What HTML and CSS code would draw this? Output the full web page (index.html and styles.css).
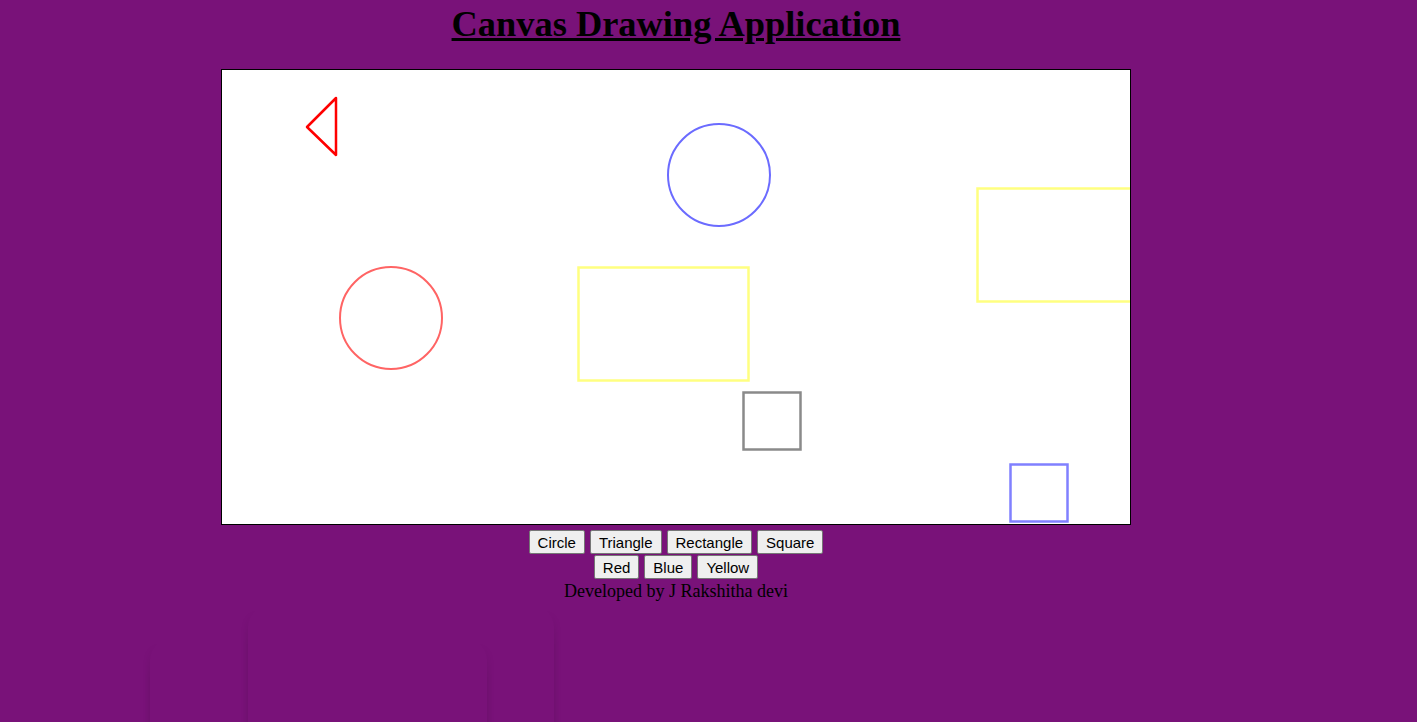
FILE: index.html
```html
<!DOCTYPE html>
<html>
<head>
<meta charset="utf-8">
<title>Canvas Drawing Application</title>
<link rel="stylesheet" href="styles.css">
</head>
<body>
<main class="page">
  <h1 class="title">Canvas Drawing Application</h1>
  <div class="canvas">
    <svg width="908" height="454" viewBox="0 0 908 454">
      <polygon points="114,28 85,57 114,85" fill="none" stroke="#ff0000" stroke-width="2.5" stroke-linejoin="round"/>
      <circle cx="497" cy="105" r="51" fill="none" stroke="#6b6bff" stroke-width="2"/>
      <circle cx="169" cy="248" r="51" fill="none" stroke="#ff6464" stroke-width="2"/>
      <rect x="356.5" y="197.5" width="170" height="113" fill="none" stroke="#ffff80" stroke-width="2.5"/>
      <rect x="755.5" y="118.5" width="200" height="113" fill="none" stroke="#ffff80" stroke-width="2.5"/>
      <rect x="521.5" y="322.5" width="57" height="57" fill="none" stroke="#8a8a8a" stroke-width="2.5"/>
      <rect x="788.5" y="394.5" width="57" height="57" fill="none" stroke="#8080ff" stroke-width="2.5"/>
    </svg>
  </div>
  <div class="btn-row btn-row-first">
    <button class="btn">Circle</button>
    <button class="btn">Triangle</button>
    <button class="btn">Rectangle</button>
    <button class="btn">Square</button>
  </div>
  <div class="btn-row btn-row-second">
    <button class="btn">Red</button>
    <button class="btn">Blue</button>
    <button class="btn">Yellow</button>
  </div>
  <p class="credit">Developed by J Rakshitha devi</p>
</main>
<div class="ghost ghost-a"><div class="ghost-card"></div></div>
<div class="ghost ghost-b"><div class="ghost-card"></div></div>
</body>
</html>
```

FILE: styles.css
```css
html, body {
  margin: 0;
  padding: 0;
  height: 100%;
  overflow: hidden;
}
body {
  background: #791279;
  font-family: "Liberation Serif", "Times New Roman", serif;
  color: #000;
}
.page {
  display: flex;
  flex-direction: column;
  align-items: center;
  margin-right: 65px;
}
.title {
  margin: 0;
  font-size: 36.4px;
  font-weight: bold;
  text-decoration: underline;
  line-height: 48px;
}
.canvas {
  margin-top: 21px;
  width: 908px;
  height: 454px;
  background: #fff;
  border: 1px solid #000;
}
.canvas svg {
  display: block;
}
.btn-row {
  display: flex;
  gap: 5px;
}
.btn-row-first {
  margin-top: 5px;
}
.btn-row-second {
  margin-top: 1px;
}
.btn {
  font-family: "Liberation Sans", Arial, sans-serif;
  font-size: 15px;
  padding: 1px 8px;
  height: 24px;
  background: #efefef;
  border: 1px solid #767676;
  border-radius: 2px;
  color: #000;
}
.credit {
  margin: 0;
  font-size: 18px;
  line-height: 24px;
}
.ghost {
  position: absolute;
  padding: 12px;
  -webkit-mask-image: linear-gradient(to bottom, transparent 0, transparent 14px, #000 50px);
  mask-image: linear-gradient(to bottom, transparent 0, transparent 14px, #000 50px);
}
.ghost-card {
  height: 100%;
  border-radius: 20px 20px 0 0;
  box-shadow: -3px 0 5px rgba(0,0,0,0.07), 3px 0 5px rgba(0,0,0,0.07);
}
.ghost-a {
  left: 138px;
  top: 628px;
  width: 337px;
  height: 120px;
}
.ghost-b {
  left: 236px;
  top: 595px;
  width: 306px;
  height: 150px;
}
```
